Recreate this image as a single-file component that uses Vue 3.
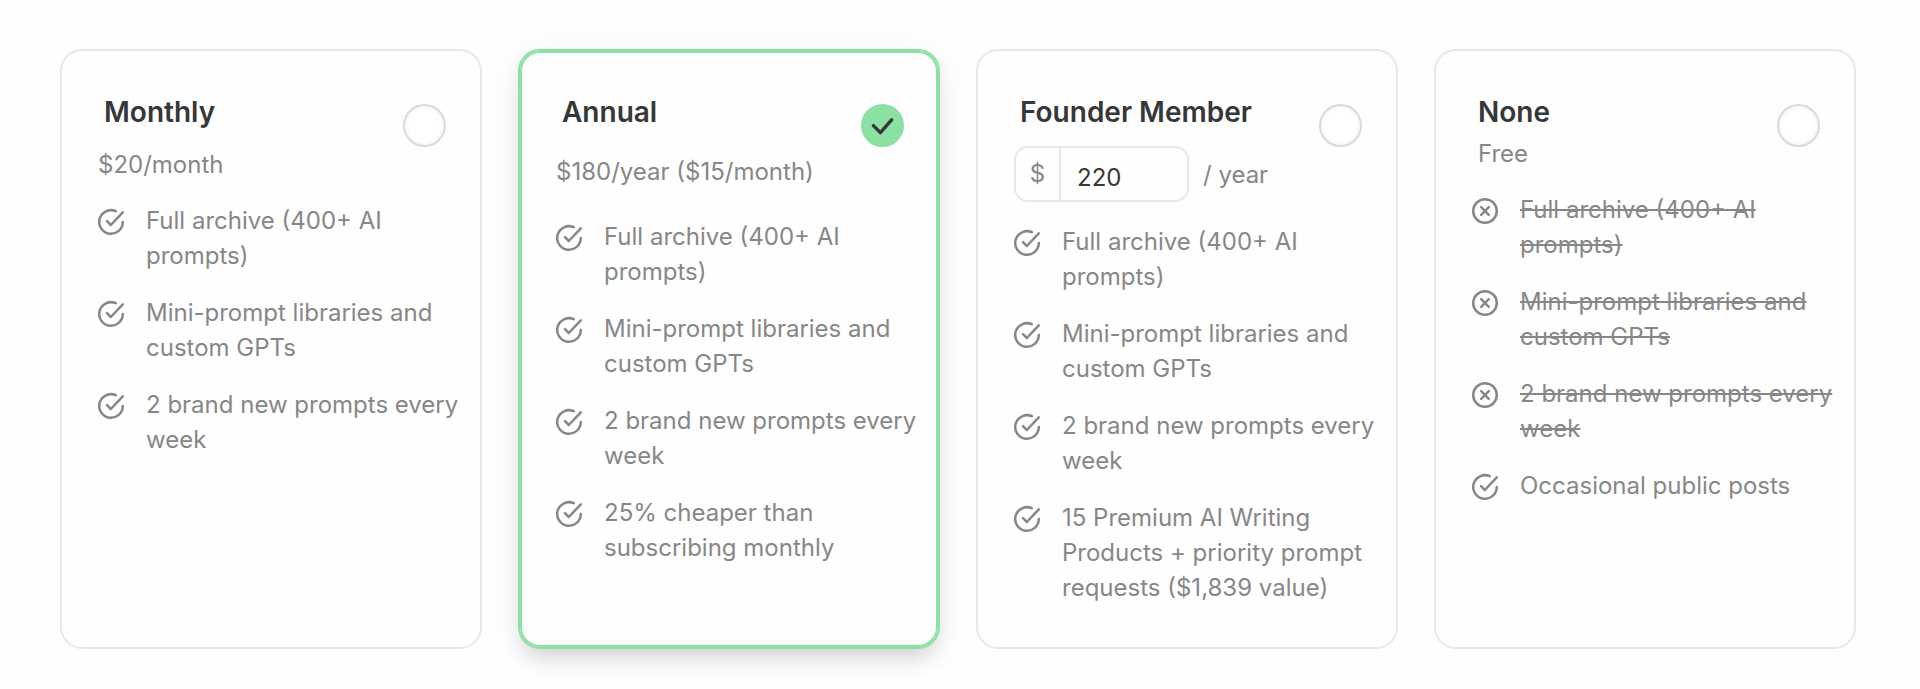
<script setup>
import { ref } from 'vue'

const selected = ref('annual')
const amount = ref('220')

const shared = ['Full archive (400+ AI prompts)', 'Mini-prompt libraries and custom GPTs', '2 brand new prompts every week']
const included = (texts) => texts.map((text) => ({ text, included: true }))
const excluded = (texts) => texts.map((text) => ({ text, included: false }))

const plans = [
  { id: 'monthly', name: 'Monthly', price: '$20/month', features: included(shared) },
  {
    id: 'annual',
    name: 'Annual',
    price: '$180/year ($15/month)',
    features: included([...shared, '25% cheaper than subscribing monthly']),
  },
  {
    id: 'founder',
    name: 'Founder Member',
    custom: true,
    features: included([...shared, '15 Premium AI Writing Products + priority prompt requests ($1,839 value)']),
  },
  {
    id: 'none',
    name: 'None',
    price: 'Free',
    features: [...excluded(shared), ...included(['Occasional public posts'])],
  },
]
</script>

<template>
  <main class="plans">
    <section
      v-for="plan in plans"
      :key="plan.id"
      class="card"
      :class="[plan.id, { selected: selected === plan.id }]"
    >
      <label class="title" :for="'plan-' + plan.id">{{ plan.name }}</label>
      <span class="choice">
        <input :id="'plan-' + plan.id" v-model="selected" class="radio" type="radio" name="plan" :value="plan.id" />
        <svg v-if="selected === plan.id" class="tick" viewBox="0 0 43 43" aria-hidden="true">
          <path d="M12.4 21.6 19.4 28.6 30.6 15.8" />
        </svg>
      </span>

      <div v-if="plan.custom" class="price amount">
        <span class="field">
          <span class="currency">$</span>
          <input v-model="amount" class="value" type="text" inputmode="numeric" aria-label="Yearly amount in dollars" />
        </span>
        <span>/ year</span>
      </div>
      <p v-else class="price">{{ plan.price }}</p>

      <ul class="features">
        <li v-for="item in plan.features" :key="item.text" class="feature">
          <svg v-if="item.included" class="icon" viewBox="0 0 26 26" aria-hidden="true">
            <path d="M17.8 2.2A11.8 11.8 0 1 0 24.8 13" />
            <path d="M9 12.2 12.8 16 24.8 3.4" />
          </svg>
          <svg v-else class="icon" viewBox="0 0 26 26" aria-hidden="true">
            <circle cx="13" cy="13" r="11.8" />
            <path d="M9.2 9.2 16.8 16.8M16.8 9.2 9.2 16.8" />
          </svg>
          <span :class="{ struck: !item.included }">{{ item.text }}</span>
        </li>
      </ul>
    </section>
  </main>
</template>

<style>
body {
  margin: 0;
  background: #fefefe;
}
</style>

<style scoped>
.plans {
  display: grid;
  grid-template-columns: repeat(4, minmax(0, 1fr));
  gap: 36px;
  padding: 49px 64px 40px 60px;
  font-family: Inter, "Liberation Sans", sans-serif;
  font-size: 24px;
  line-height: 35px;
  color: #868787;
}

.card {
  display: grid;
  grid-template: auto auto 1fr / 1fr auto;
  grid-template-areas: "title choice" "price choice" "features features";
  box-sizing: border-box;
  padding: 43px 14px 42px 36px;
  border: 2px solid #e8e8e8;
  border-radius: 22px;
  background: #fefefe;
}

.card.selected {
  border-color: #8ae1a2;
  box-shadow:
    inset 0 0 0 2px #8ae1a2,
    0 14px 22px -6px rgba(0, 0, 0, 0.14),
    0 6px 32px rgba(0, 0, 0, 0.06);
}

.title {
  grid-area: title;
  padding-left: 6px;
  font-size: 28px;
  font-weight: 600;
  line-height: 36px;
  color: #363737;
}

.choice {
  grid-area: choice;
  position: relative;
  width: 43px;
  height: 43px;
  margin: 10px 20px 0 0;
}

.radio {
  display: block;
  box-sizing: border-box;
  width: 100%;
  height: 100%;
  margin: 0;
  border: 2px solid #dadada;
  border-radius: 50%;
  background: #fff;
  box-shadow: inset 0 0 4px rgba(0, 0, 0, 0.08);
  appearance: none;
}

.radio:checked {
  border-color: #8ae1a2;
  background: #8ae1a2;
  box-shadow: none;
}

.tick {
  position: absolute;
  inset: 0;
  fill: none;
  stroke: #363737;
  stroke-width: 3.4;
  stroke-linecap: round;
  stroke-linejoin: round;
  pointer-events: none;
}

.price {
  grid-area: price;
  margin: 17px 0 21px;
}

.annual .price {
  margin: 24px 0 30px;
}

.founder .price {
  margin: 16px 0 22px;
}

.none .price {
  margin: 6px 0 21px;
  padding-left: 6px;
}

.amount {
  display: flex;
  align-items: center;
  gap: 14px;
}

.field {
  display: flex;
  box-sizing: border-box;
  width: 175px;
  height: 56px;
  border: 2px solid #e8e8e8;
  border-radius: 14px;
  background: #fefefe;
  overflow: hidden;
}

.currency {
  box-sizing: border-box;
  width: 45px;
  border-right: 2px solid #e8e8e8;
  line-height: 52px;
  text-align: center;
}

.value {
  flex: 1;
  min-width: 0;
  padding: 6px 16px 0;
  border: 0;
  outline: 0;
  background: transparent;
  font: inherit;
  color: #363737;
}

.features {
  grid-area: features;
  display: flex;
  flex-direction: column;
  gap: 22px;
  margin: 0;
  padding: 0;
  list-style: none;
}

.feature {
  display: flex;
  gap: 22px;
}

.icon {
  flex: none;
  width: 26px;
  height: 26px;
  margin-top: 6px;
  overflow: visible;
  fill: none;
  stroke: currentColor;
  stroke-width: 2.5;
  stroke-linecap: round;
  stroke-linejoin: round;
}

.struck {
  text-decoration: line-through;
}
</style>
